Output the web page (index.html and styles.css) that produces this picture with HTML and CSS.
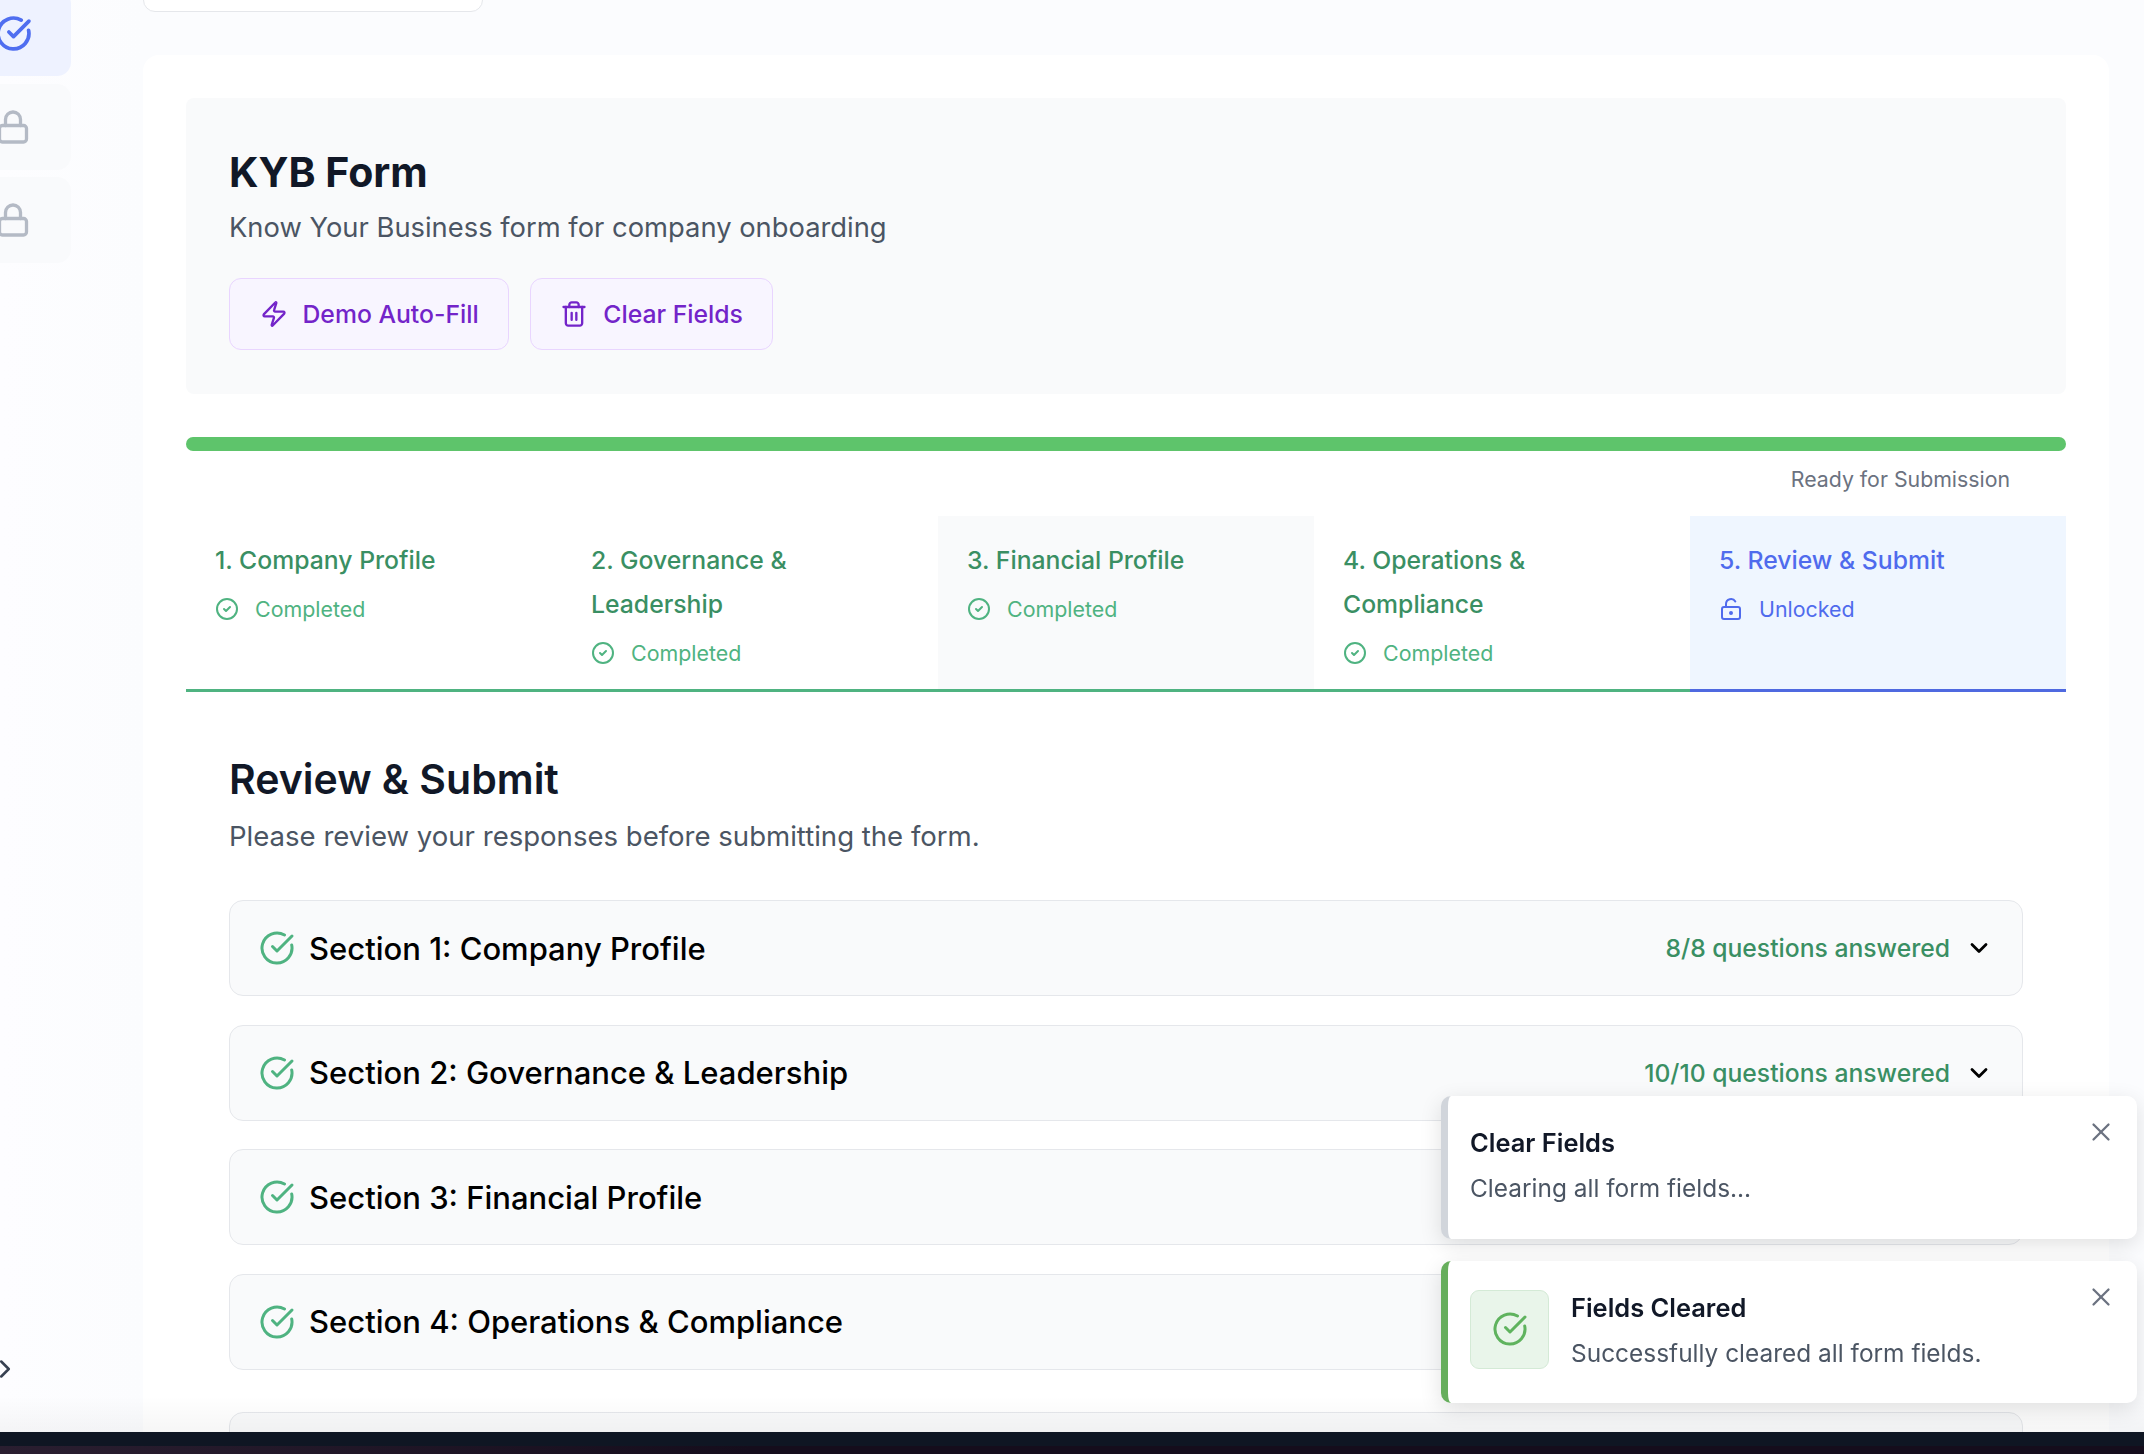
FILE: index.html
```html
<!DOCTYPE html>
<html lang="en">
<head>
<meta charset="utf-8">
<title>KYB Form</title>
<link rel="stylesheet" href="styles.css">
</head>
<body>
<div class="workspace">
  <aside class="sidebar">
    <div class="nav-list">
      <div class="nav-item nav-item-active">
        <svg class="nav-icon" viewBox="0 0 24 24"><path d="M21.801 10A10 10 0 1 1 17 3.335"/><path d="m9 11 3 3L22 4"/></svg>
      </div>
      <div class="nav-item nav-item-locked">
        <svg class="nav-icon" viewBox="0 0 24 24"><rect x="3" y="11" width="18" height="11" rx="2"/><path d="M7 11V7a5 5 0 0 1 10 0v4"/></svg>
      </div>
      <div class="nav-item nav-item-locked">
        <svg class="nav-icon" viewBox="0 0 24 24"><rect x="3" y="11" width="18" height="11" rx="2"/><path d="M7 11V7a5 5 0 0 1 10 0v4"/></svg>
      </div>
    </div>
    <svg class="sidebar-toggle" viewBox="0 0 24 24"><path d="m9 18 6-6-6-6"/></svg>
  </aside>
  <main class="content">
    <div class="top-card"></div>
    <section class="main-card">
      <header class="form-header">
        <h1 class="page-title">KYB Form</h1>
        <p class="page-sub">Know Your Business form for company onboarding</p>
        <div class="actions">
          <button class="action-btn">
            <svg class="btn-icon" viewBox="0 0 24 24"><path d="M4 14a1 1 0 0 1-.78-1.63l9.9-10.2a.5.5 0 0 1 .86.46l-1.92 6.02A1 1 0 0 0 13 10h7a1 1 0 0 1 .78 1.63l-9.9 10.2a.5.5 0 0 1-.86-.46l1.92-6.02A1 1 0 0 0 11 14z"/></svg>
            Demo Auto-Fill
          </button>
          <button class="action-btn">
            <svg class="btn-icon" viewBox="0 0 24 24"><path d="M3 6h18"/><path d="M19 6v14c0 1-1 2-2 2H7c-1 0-2-1-2-2V6"/><path d="M8 6V4c0-1 1-2 2-2h4c1 0 2 1 2 2v2"/><path d="M10 11v6"/><path d="M14 11v6"/></svg>
            Clear Fields
          </button>
        </div>
      </header>

      <div class="progress"></div>
      <div class="progress-label">Ready for Submission</div>

      <nav class="tabs">
        <div class="tab">
          <div class="tab-title">1. Company Profile</div>
          <div class="tab-status"><svg class="status-icon" viewBox="0 0 24 24"><circle cx="12" cy="12" r="10"/><path d="m9 12 2 2 4-4"/></svg>Completed</div>
        </div>
        <div class="tab">
          <div class="tab-title">2. Governance &amp; Leadership</div>
          <div class="tab-status"><svg class="status-icon" viewBox="0 0 24 24"><circle cx="12" cy="12" r="10"/><path d="m9 12 2 2 4-4"/></svg>Completed</div>
        </div>
        <div class="tab tab-shaded">
          <div class="tab-title">3. Financial Profile</div>
          <div class="tab-status"><svg class="status-icon" viewBox="0 0 24 24"><circle cx="12" cy="12" r="10"/><path d="m9 12 2 2 4-4"/></svg>Completed</div>
        </div>
        <div class="tab">
          <div class="tab-title">4. Operations &amp; Compliance</div>
          <div class="tab-status"><svg class="status-icon" viewBox="0 0 24 24"><circle cx="12" cy="12" r="10"/><path d="m9 12 2 2 4-4"/></svg>Completed</div>
        </div>
        <div class="tab tab-current">
          <div class="tab-title">5. Review &amp; Submit</div>
          <div class="tab-status"><svg class="status-icon" viewBox="0 0 24 24"><circle cx="12" cy="16" r="1"/><rect x="3" y="10" width="18" height="12" rx="2"/><path d="M7 10V7a5 5 0 0 1 9.33-2.5"/></svg>Unlocked</div>
        </div>
      </nav>

      <section class="review">
        <h2 class="review-title">Review &amp; Submit</h2>
        <p class="review-sub">Please review your responses before submitting the form.</p>
        <div class="accordion">
          <div class="acc-item">
            <svg class="acc-check" viewBox="0 0 24 24"><path d="M21.801 10A10 10 0 1 1 17 3.335"/><path d="m9 11 3 3L22 4"/></svg>
            <span class="acc-title">Section 1: Company Profile</span>
            <span class="acc-meta">8/8 questions answered</span>
            <svg class="acc-chevron" viewBox="0 0 24 24"><path d="m6 9 6 6 6-6"/></svg>
          </div>
          <div class="acc-item">
            <svg class="acc-check" viewBox="0 0 24 24"><path d="M21.801 10A10 10 0 1 1 17 3.335"/><path d="m9 11 3 3L22 4"/></svg>
            <span class="acc-title">Section 2: Governance &amp; Leadership</span>
            <span class="acc-meta">10/10 questions answered</span>
            <svg class="acc-chevron" viewBox="0 0 24 24"><path d="m6 9 6 6 6-6"/></svg>
          </div>
          <div class="acc-item">
            <svg class="acc-check" viewBox="0 0 24 24"><path d="M21.801 10A10 10 0 1 1 17 3.335"/><path d="m9 11 3 3L22 4"/></svg>
            <span class="acc-title">Section 3: Financial Profile</span>
          </div>
          <div class="acc-item">
            <svg class="acc-check" viewBox="0 0 24 24"><path d="M21.801 10A10 10 0 1 1 17 3.335"/><path d="m9 11 3 3L22 4"/></svg>
            <span class="acc-title">Section 4: Operations &amp; Compliance</span>
          </div>
          <div class="acc-item acc-item-last"></div>
        </div>
      </section>
    </section>
  </main>
</div>
<div class="bottom-bar"></div>

<div class="toasts">
  <div class="toast toast-neutral">
    <div class="toast-text">
      <div class="toast-title">Clear Fields</div>
      <div class="toast-msg">Clearing all form fields...</div>
    </div>
    <svg class="toast-close" viewBox="0 0 24 24"><path d="M18 6 6 18"/><path d="m6 6 12 12"/></svg>
  </div>
  <div class="toast toast-success">
    <div class="toast-badge">
      <svg class="toast-check" viewBox="0 0 24 24"><path d="M21.801 10A10 10 0 1 1 17 3.335"/><path d="m9 11 3 3L22 4"/></svg>
    </div>
    <div class="toast-text">
      <div class="toast-title">Fields Cleared</div>
      <div class="toast-msg">Successfully cleared all form fields.</div>
    </div>
    <svg class="toast-close" viewBox="0 0 24 24"><path d="M18 6 6 18"/><path d="m6 6 12 12"/></svg>
  </div>
</div>
</body>
</html>
```

FILE: styles.css
```css
* { box-sizing: border-box; }
html, body { margin: 0; height: 100%; }
body {
  display: flex;
  flex-direction: column;
  height: 1454px;
  overflow: hidden;
  background: #fbfcfe;
  font-family: Inter, "Liberation Sans", sans-serif;
  color: #111827;
}
svg { fill: none; stroke: currentColor; stroke-width: 2; stroke-linecap: round; stroke-linejoin: round; flex: none; display: block; }

.workspace { position: relative; flex: 1; min-height: 0; display: flex; overflow: hidden; }
.workspace::after {
  content: "";
  position: absolute;
  left: 0; right: 0; bottom: 0;
  height: 36px;
  background: linear-gradient(to bottom, rgba(0,0,0,0), rgba(0,0,0,.035));
  pointer-events: none;
}

.sidebar {
  width: 143px;
  flex: none;
  display: flex;
  flex-direction: column;
  background: linear-gradient(to right, #fdfdff, #fbfcfe);
}
.nav-list { margin: -10px 0 0 -45px; width: 116px; display: flex; flex-direction: column; gap: 7.5px; }
.nav-item { height: 86px; border-radius: 14px; display: flex; align-items: center; justify-content: center; }
.nav-item-active { background: #eef2ff; color: #4f6ef0; }
.nav-item-locked { background: #f9fafc; color: #b4bac5; }
.nav-icon { width: 36px; height: 36px; stroke-width: 2.2; }
.nav-item-active .nav-icon { width: 37px; height: 37px; stroke-width: 2.4; }
.sidebar-toggle { width: 30px; height: 30px; margin: 1091px 0 0 -10px; color: #374151; stroke-width: 2; }

.content { flex: 1; min-width: 0; padding-right: 35px; }
.top-card {
  width: 340px;
  height: 60px;
  margin-top: -48px;
  background: #fff;
  border: 1px solid #e5e7eb;
  border-radius: 12px;
}
.main-card {
  margin-top: 43px;
  padding: 43px;
  background: #fff;
  border-radius: 16px;
}

.form-header { padding: 50px 43px 44px; background: #f9fafb; border-radius: 8px; }
.page-title { margin: 0; font-size: 41px; line-height: 48px; font-weight: 700; color: #111827; }
.page-sub { margin: 12px 0 0; font-size: 27.35px; line-height: 40px; color: #4b5563; }
.actions { display: flex; gap: 21px; margin-top: 30px; }
.action-btn {
  display: flex;
  align-items: center;
  gap: 15px;
  height: 72px;
  padding: 0 29px 0 29.5px;
  background: #f8f5ff;
  border: 1px solid #e9d5ff;
  border-radius: 12px;
  color: #7324c9;
  font: 500 24.75px Inter, "Liberation Sans", sans-serif;
}
.btn-icon { width: 28px; height: 28px; }

.progress { margin-top: 43px; height: 14px; background: #5ec46b; border-radius: 7px; }
.progress-label { margin-top: 13px; padding-right: 56px; text-align: right; font-size: 21.3px; line-height: 30px; color: #6b7280; }

.tabs { margin-top: 22px; display: grid; grid-template-columns: repeat(5, 1fr); }
.tab { padding: 22px 29px 21px; border-bottom: 3px solid #4fb381; }
.tab-shaded { background: #f9fafb; }
.tab-current { background: #eff6ff; border-bottom-color: #4f69e0; }
.tab-title { font-size: 24.75px; line-height: 44px; font-weight: 500; color: #3a8f63; }
.tab-status { margin-top: 12px; display: flex; align-items: center; gap: 16px; font-size: 21.4px; line-height: 30px; color: #4fb381; }
.status-icon { width: 24px; height: 24px; }
.tab-current .tab-title, .tab-current .tab-status { color: #4f6bed; }

.review { padding: 63px 43px 0; }
.review-title { margin: 0; font-size: 41px; line-height: 48px; font-weight: 600; color: #111827; }
.review-sub { margin: 13px 0 0; font-size: 27.55px; line-height: 40px; color: #4b5563; }
.accordion { margin-top: 44px; display: flex; flex-direction: column; gap: 28.5px; }
.acc-item {
  height: 96px;
  display: flex;
  align-items: center;
  padding: 0 29px;
  background: #f9fafb;
  border: 1px solid #e5e7eb;
  border-radius: 14px;
}
.acc-item-last { margin-top: 14px; }
.acc-check { width: 36px; height: 36px; color: #4fb381; }
.acc-title { margin-left: 14px; font-size: 31px; font-weight: 450; color: #000; }
.acc-meta { margin-left: auto; font-size: 24.7px; font-weight: 450; color: #3a8f63; }
.acc-chevron { margin-left: 15px; width: 28px; height: 28px; color: #000; stroke-width: 2.4; }

.bottom-bar {
  height: 22px;
  flex: none;
  background:
    linear-gradient(to bottom, #0f1623 14px, transparent 14px),
    linear-gradient(to right, #2a1e30, #150d1c 35%);
}

.toasts {
  position: fixed;
  top: 1096px;
  right: 7px;
  width: 696px;
  display: flex;
  flex-direction: column;
  gap: 22px;
}
.toast {
  position: relative;
  height: 142.5px;
  display: flex;
  align-items: center;
  gap: 22px;
  padding-left: 22px;
  background: #fff;
  border-left: 7px solid #d1d5db;
  border-radius: 10px;
  box-shadow: 0 6px 22px rgba(0,0,0,.12);
}
.toast-success { border-left-color: #66ae5c; }
.toast-title { font-size: 25.45px; line-height: 30px; font-weight: 600; color: #111827; }
.toast-msg { margin-top: 12px; font-size: 24.45px; line-height: 36px; color: #4b5563; }
.toast-badge {
  width: 79px;
  height: 79px;
  flex: none;
  margin-top: -5px;
  display: flex;
  align-items: center;
  justify-content: center;
  background: #e9f5ea;
  border: 1px solid #d4ead6;
  border-radius: 9px;
}
.toast-check { width: 36px; height: 36px; color: #5fb35e; }
.toast-close { position: absolute; top: 21px; right: 21px; width: 30px; height: 30px; color: #6b7280; stroke-width: 1.8; }
```
